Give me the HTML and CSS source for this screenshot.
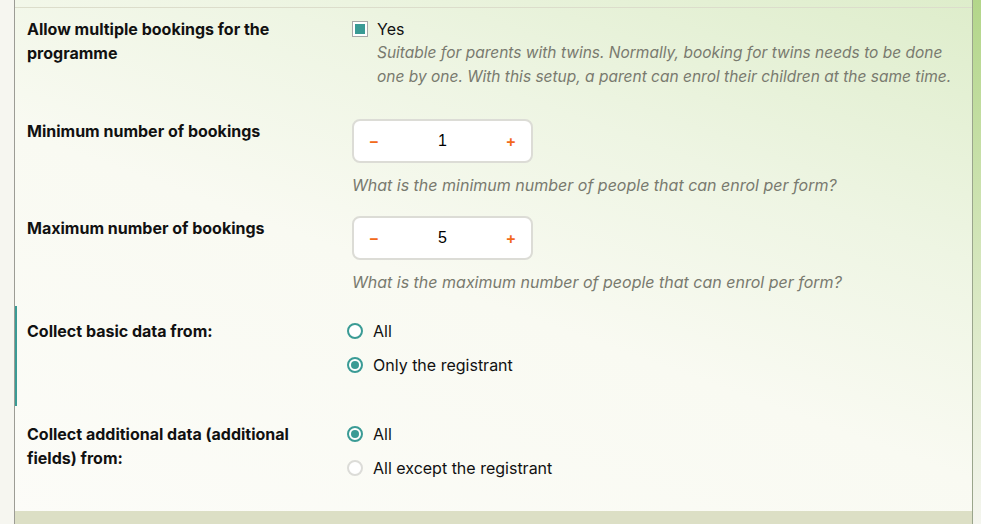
FILE: index.html
```html
<!DOCTYPE html>
<html>
<head>
  <title>Booking settings</title>
  <link rel="stylesheet" href="styles.css">
</head>
<body>
  <div class="page">
    <div class="side-left"></div>
    <div class="panel">
      <div class="divider"></div>

      <div class="row row-multi">
        <div class="label">Allow multiple bookings for the programme</div>
        <div class="field">
          <label class="check">
            <span class="box checked"></span>
            <span>Yes</span>
          </label>
          <p class="desc">Suitable for parents with twins. Normally, booking for twins needs to be done one by one. With this setup, a parent can enrol their children at the same time.</p>
        </div>
      </div>

      <div class="row row-min">
        <div class="label">Minimum number of bookings</div>
        <div class="field">
          <div class="stepper">
            <button type="button" class="step">&minus;</button>
            <span class="value">1</span>
            <button type="button" class="step">+</button>
          </div>
          <p class="help">What is the minimum number of people that can enrol per form?</p>
        </div>
      </div>

      <div class="row row-max">
        <div class="label">Maximum number of bookings</div>
        <div class="field">
          <div class="stepper">
            <button type="button" class="step">&minus;</button>
            <span class="value">5</span>
            <button type="button" class="step">+</button>
          </div>
          <p class="help">What is the maximum number of people that can enrol per form?</p>
        </div>
      </div>

      <div class="row row-basic active">
        <div class="label">Collect basic data from:</div>
        <div class="field options">
          <label class="radio"><span class="dot"></span>All</label>
          <label class="radio"><span class="dot on"></span>Only the registrant</label>
        </div>
      </div>

      <div class="row row-extra">
        <div class="label">Collect additional data (additional fields) from:</div>
        <div class="field options">
          <label class="radio"><span class="dot on"></span>All</label>
          <label class="radio"><span class="dot off"></span>All except the registrant</label>
        </div>
      </div>

      <div class="footer-band"></div>
    </div>
    <div class="side-right"></div>
  </div>
</body>
</html>
```

FILE: styles.css
```css
* {
  box-sizing: border-box;
}
html, body {
  margin: 0;
  height: 100%;
}
body {
  font-family: Inter, "Noto Sans", sans-serif;
  font-size: 16px;
  color: #111;
}
.page {
  display: flex;
  height: 524px;
  overflow: hidden;
}
.side-left {
  width: 15px;
  background: #f6f6f0;
  border-right: 1px solid #9c9c95;
}
.side-right {
  width: 8px;
  background: linear-gradient(to bottom, #b3d68a, #dbe9c6 60%, #f4f5ee);
}
.panel {
  flex: 1;
  display: flex;
  flex-direction: column;
  border-right: 1px solid #9aa58c;
  background: linear-gradient(200deg, #deedcb 0%, #eef5e3 30%, #f9faf2 55%, #fcfcf8 100%);
}
.divider {
  height: 8px;
  border-bottom: 1px solid #dcddcb;
  flex-shrink: 0;
}
.row {
  display: grid;
  grid-template-columns: 325px 1fr;
  padding: 0 4px 0 12px;
  line-height: 24px;
}
.label {
  font-weight: 700;
  font-size: 16px;
  padding-right: 28px;
}
.row-multi {
  margin-top: 9px;
}
.row-min {
  margin-top: 30px;
}
.row-max {
  margin-top: 19px;
}
.row-basic {
  margin-top: 12px;
  padding-top: 13px;
  padding-bottom: 29px;
}
.row-extra {
  margin-top: 16px;
}
.active {
  border-left: 2px solid #3a9b95;
  padding-left: 10px;
}
.check {
  display: flex;
  align-items: center;
  gap: 9px;
}
.box {
  width: 16px;
  height: 16px;
  border: 1px solid #a9a9a9;
  background: #fff;
  padding: 2px;
}
.box.checked::after {
  content: "";
  display: block;
  width: 100%;
  height: 100%;
  background: #3a9b95;
}
.desc, .help {
  margin: 0;
  font-style: italic;
  font-size: 16px;
  color: #797a6f;
}
.desc {
  font-size: 15.5px;
  padding-left: 25px;
}
.help {
  margin-top: 10px;
}
.stepper {
  display: flex;
  align-items: center;
  width: 181px;
  height: 44px;
  border: 2px solid #dcdcd6;
  border-radius: 8px;
  background: #fff;
}
.step {
  width: 40px;
  border: 0;
  background: none;
  color: #f26a1b;
  font-size: 16px;
  font-weight: 600;
  font-family: Inter, sans-serif;
  cursor: pointer;
}
.value {
  flex: 1;
  text-align: center;
  font-family: "Liberation Sans", Arial, sans-serif;
  font-size: 16px;
  color: #000;
}
.options {
  display: flex;
  flex-direction: column;
  gap: 10px;
  margin-left: -5px;
}
.radio {
  display: flex;
  align-items: center;
  gap: 10px;
}
.dot {
  width: 16px;
  height: 16px;
  border-radius: 50%;
  border: 2px solid #3a9b95;
  background: #fff;
  padding: 2px;
}
.dot.on::after {
  content: "";
  display: block;
  width: 100%;
  height: 100%;
  border-radius: 50%;
  background: #3a9b95;
}
.dot.off {
  border-color: #dcdcd8;
}
.footer-band {
  margin-top: auto;
  height: 13px;
  background: #dcdfc5;
  flex-shrink: 0;
}
```
